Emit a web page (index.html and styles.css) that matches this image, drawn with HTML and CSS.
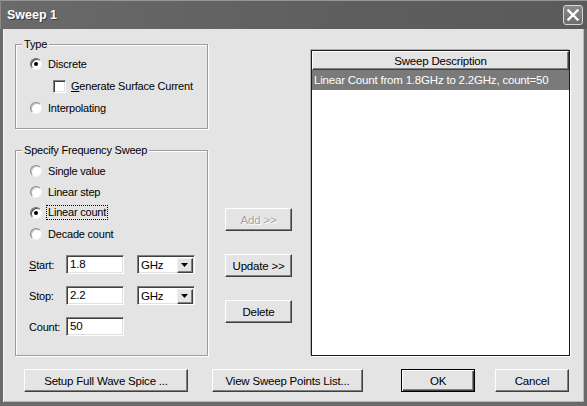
FILE: index.html
```html
<!DOCTYPE html>
<html>
<head>
<meta charset="utf-8">
<title>Sweep 1</title>
<link rel="stylesheet" href="styles.css">
</head>
<body>
<div class="window">
  <div class="titlebar">
    <span class="title">Sweep 1</span>
    <span class="close"><svg width="12" height="12" viewBox="0 0 12 12"><path d="M1.5 1.5L10.5 10.5M10.5 1.5L1.5 10.5" stroke="#fff" stroke-width="2.4" stroke-linecap="square"/></svg></span>
  </div>
  <div class="frame">
    <div class="main">
      <div class="left">
        <fieldset class="group type">
          <legend>Type</legend>
          <div class="inner rows22">
            <div class="opt"><span class="radio on"></span><span>Discrete</span></div>
            <div class="opt sub"><span class="check"></span><span><u>G</u>enerate Surface Current</span></div>
            <div class="opt"><span class="radio"></span><span>Interpolating</span></div>
          </div>
        </fieldset>
        <fieldset class="group freq">
          <legend>Specify Frequency Sweep</legend>
          <div class="inner">
            <div class="rows21">
              <div class="opt"><span class="radio"></span><span>Single value</span></div>
              <div class="opt"><span class="radio"></span><span>Linear step</span></div>
              <div class="opt"><span class="radio on"></span><span class="focus">Linear count</span></div>
              <div class="opt"><span class="radio"></span><span>Decade count</span></div>
            </div>
            <div class="fields">
              <div class="field"><span class="lbl"><u>S</u>tart:</span><span class="input">1.8</span><span class="select"><span class="val">GHz</span><span class="arrow"><svg width="7" height="4" viewBox="0 0 7 4"><path d="M0 0H7L3.5 4Z" fill="#000"/></svg></span></span></div>
              <div class="field"><span class="lbl">Stop:</span><span class="input">2.2</span><span class="select"><span class="val">GHz</span><span class="arrow"><svg width="7" height="4" viewBox="0 0 7 4"><path d="M0 0H7L3.5 4Z" fill="#000"/></svg></span></span></div>
              <div class="field"><span class="lbl">Count:</span><span class="input">50</span></div>
            </div>
          </div>
        </fieldset>
      </div>
      <div class="mid">
        <div class="btn disabled">Add &gt;&gt;</div>
        <div class="btn">Update &gt;&gt;</div>
        <div class="btn">Delete</div>
      </div>
      <div class="list">
        <div class="list-head">Sweep Description</div>
        <div class="list-row sel">Linear Count from 1.8GHz to 2.2GHz, count=50</div>
      </div>
    </div>
    <div class="footer">
      <div class="btn b-setup">Setup Full Wave Spice ...</div>
      <div class="btn b-view">View Sweep Points List...</div>
      <div class="btn default b-ok">OK</div>
      <div class="btn b-cancel">Cancel</div>
    </div>
  </div>
</div>
</body>
</html>
```

FILE: styles.css
```css
* { box-sizing: border-box; }
html, body { margin: 0; padding: 0; }
body {
  width: 587px;
  height: 406px;
  overflow: hidden;
  font-family: "Liberation Sans", Arial, sans-serif;
  font-size: 11px;
  letter-spacing: -0.2px;
  color: #000;
  background: #e4e4e4;
}
.window {
  width: 587px;
  height: 406px;
  display: flex;
  flex-direction: column;
  background: #e4e4e4;
}
.titlebar {
  height: 29px;
  flex: none;
  display: flex;
  align-items: center;
  justify-content: space-between;
  padding: 0 4px 0 6px;
  background: linear-gradient(to right, #6a6a6a, #5e5e5e 60%, #5a5a5a);
  border-top: 1px solid #959595;
  border-left: 1px solid #8a8a8a;
}
.title {
  color: #fff;
  font-weight: bold;
  font-size: 12.5px;
  letter-spacing: 0;
  text-shadow: 1px 1px 0 #3a3a3a;
}
.close {
  width: 20px;
  height: 20px;
  border: 1px solid #d6d6d6;
  border-radius: 3px;
  background: linear-gradient(#8a8a8a, #6e6e6e);
  display: flex;
  align-items: center;
  justify-content: center;
}
.frame {
  flex: 1;
  border: 3px solid #6a6a6a;
  border-top: 0;
  border-bottom-width: 4px;
  display: flex;
  flex-direction: column;
  padding: 9px 0 0 12px;
  box-shadow: inset 1px 0 0 #f4f4f4, inset -1px -1px 0 #b8b8b8;
}
.main {
  display: flex;
  height: 318px;
}
.left {
  width: 193px;
  display: flex;
  flex-direction: column;
}
.group {
  margin: 0;
  padding: 0 0 0 6px;
  border: 1px solid #9c9c9c;
  box-shadow: 1px 1px 0 #fff, inset 1px 1px 0 #fff;
}
.group legend {
  padding: 0 2px;
  line-height: 13px;
  height: 13px;
  background: #e4e4e4;
}
.inner { padding-left: 7px; }
.type .inner { padding-top: 2px; padding-bottom: 9px; }
.freq { margin-top: 15px; }
.freq .inner { padding-top: 3px; padding-bottom: 19px; }
.opt {
  display: flex;
  align-items: center;
}
.rows22 .opt { height: 22px; }
.rows21 .opt { height: 21px; }
.radio {
  position: relative;
  width: 12px;
  height: 12px;
  margin: 0 6px 0 1px;
  border-radius: 50%;
  background: #fff;
  border: 1px solid;
  border-color: #8a8a8a #f2f2f2 #f2f2f2 #8a8a8a;
  box-shadow: inset 1px 1px 0 #c4c4c4;
  flex: none;
}
.radio.on { border-color: #6a6a6a #f2f2f2 #f2f2f2 #6a6a6a; box-shadow: inset 1px 1px 0 #505050; }
.radio.on::after {
  content: "";
  position: absolute;
  left: 3px;
  top: 3px;
  width: 4px;
  height: 4px;
  border-radius: 50%;
  background: #000;
}
.sub { padding-left: 24px; }
.check {
  width: 13px;
  height: 13px;
  margin-right: 5px;
  background: #fff;
  border: 1px solid;
  border-color: #808080 #fff #fff #808080;
  box-shadow: inset 1px 1px 0 #404040, inset -1px -1px 0 #e0e0e0;
  flex: none;
}
.focus {
  outline: 1px dotted #000;
  outline-offset: 0;
  padding: 0 1px;
  margin-left: -1px;
  line-height: 13px;
}
.fields {
  display: flex;
  flex-direction: column;
  gap: 12px;
  margin-top: 11px;
}
.field {
  display: flex;
  align-items: center;
  height: 19px;
}
.lbl { width: 37px; flex: none; padding-left: 0; }
.input {
  width: 58px;
  height: 19px;
  background: #fff;
  border: 1px solid;
  border-color: #808080 #fff #fff #808080;
  box-shadow: inset 1px 1px 0 #404040, inset -1px -1px 0 #e0e0e0;
  padding: 0 3px;
  line-height: 17px;
  font-size: 11.5px;
}
.select {
  width: 58px;
  height: 19px;
  margin-left: 13px;
  background: #fff;
  border: 1px solid;
  border-color: #808080 #fff #fff #808080;
  box-shadow: inset 1px 1px 0 #404040, inset -1px -1px 0 #e0e0e0;
  display: flex;
  align-items: center;
  justify-content: space-between;
  padding: 2px 1px 1px 3px;
  font-size: 11.5px;
}
.arrow {
  width: 16px;
  height: 15px;
  background: #e4e4e4;
  border: 1px solid;
  border-color: #f0f0f0 #404040 #404040 #f0f0f0;
  box-shadow: inset -1px -1px 0 #808080;
  display: flex;
  align-items: center;
  justify-content: center;
  padding-right: 1px;
}
.mid {
  width: 67px;
  margin-left: 17px;
  padding-top: 170px;
  display: flex;
  flex-direction: column;
}
.mid .btn + .btn { margin-top: 23px; }
.btn {
  height: 23px;
  flex: none;
  display: flex;
  align-items: center;
  justify-content: center;
  background: #e4e4e4;
  border: 1px solid;
  border-color: #fff #404040 #404040 #fff;
  box-shadow: inset -1px -1px 0 #808080;
  font-size: 11.5px;
}
.btn.disabled { color: #a4a4a4; text-shadow: 1px 1px 0 #fff; }
.btn.default {
  border: 1px solid #000;
  box-shadow: inset 1px 1px 0 #fff, inset -1px -1px 0 #404040, inset -2px -2px 0 #808080;
}
.list {
  width: 259px;
  height: 306px;
  margin-left: 19px;
  margin-top: 12px;
  background: #fff;
  border: 1px solid #1a1a1a;
  box-shadow: 1px 1px 0 #fff, -1px -1px 0 #b0b0b0;
}
.list-head {
  height: 19px;
  background: #e4e4e4;
  border: 1px solid;
  border-color: #fff #404040 #404040 #fff;
  box-shadow: inset -1px -1px 0 #808080;
  display: flex;
  align-items: center;
  justify-content: center;
  font-size: 11.5px;
}
.list-row {
  height: 20px;
  line-height: 20px;
  padding-left: 2px;
  white-space: nowrap;
  font-size: 11.5px;
}
.list-row.sel { background: #7a7a7a; color: #fff; }
.footer {
  display: flex;
  margin-top: 13px;
}
.b-setup { width: 164px; margin-left: 9px; }
.b-view { width: 151px; margin-left: 24px; }
.b-ok { width: 74px; margin-left: 38px; }
.b-cancel { width: 74px; margin-left: 20px; }
```
